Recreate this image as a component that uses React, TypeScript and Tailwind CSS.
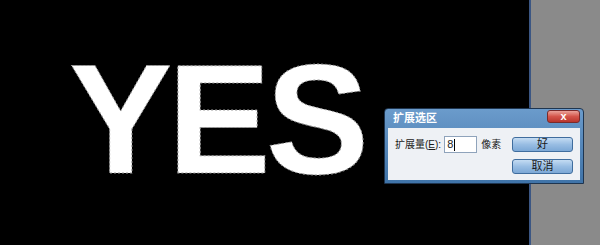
import React from "react";

const ui = { fontFamily: '"Liberation Sans", "Noto Sans CJK SC", sans-serif' };

function CanvasText() {
  return (
    <svg width="530" height="245" className="block">
      <text
        x="69"
        y="173"
        fill="#ffffff"
        stroke="#9a9a9a"
        strokeWidth="1"
        strokeDasharray="2 2"
        fontSize="155"
        fontWeight="700"
        letterSpacing="-5"
        style={{ fontFamily: '"Liberation Sans", Arial, sans-serif' }}
      >
        YES
      </text>
    </svg>
  );
}

function Button({ label }: { label: string }) {
  return (
    <button className="flex h-[15px] w-[61px] items-center justify-center rounded-[3px] border border-[#3f6d9e] bg-gradient-to-b from-[#c4dcf3] via-[#98bde3] to-[#7ca8d6] text-[11px] leading-none text-[#1a1a1a]">
      {label}
    </button>
  );
}

export default function App() {
  return (
    <div className="relative flex h-[245px] w-[600px] overflow-hidden bg-black" style={ui}>
      <div className="w-[529px] shrink-0">
        <CanvasText />
      </div>
      <div className="w-[2px] shrink-0 bg-[#3b5683]" />
      <div className="flex-1 bg-[#8a8a8a]" />

      {/* dialog */}
      <div className="absolute left-[384px] top-[108px] flex h-[76px] w-[200px] flex-col rounded-t-[4px] border border-[#1e3550] bg-gradient-to-b from-[#6b9bcb] to-[#3f73a8] px-[3px] pb-[3px]">
        <div className="relative flex h-[19px] shrink-0 items-center pl-[5px]">
          <span className="text-[11px] font-bold text-white">扩展选区</span>
          <div className="absolute right-[0px] top-[1px] flex h-[13px] w-[33px] items-center justify-center rounded-[3px] border border-[#7a2a2a] bg-gradient-to-b from-[#e9a29a] via-[#d4544a] to-[#b8352d] text-[11px] font-bold leading-none text-white">
            x
          </div>
        </div>
        <div className="flex flex-1 bg-[#eef1f5] pl-[7px] pt-[8px]">
          <div className="flex h-[17px] items-center whitespace-nowrap text-[10px] text-[#1a1a1a]">
            <span>
              扩展量(<span className="underline">E</span>):
            </span>
            <div className="ml-[3px] flex h-[17px] w-[33px] shrink-0 items-center border border-[#8fa3bb] bg-white pl-[2px] text-[11px]">
              8<span className="ml-[1px] inline-block h-[12px] w-px bg-black" />
            </div>
            <span className="ml-[4px]">像素</span>
          </div>
          <div className="ml-auto mr-[7px] flex flex-col gap-[7px] pt-[1px]">
            <Button label="好" />
            <Button label="取消" />
          </div>
        </div>
      </div>
    </div>
  );
}
